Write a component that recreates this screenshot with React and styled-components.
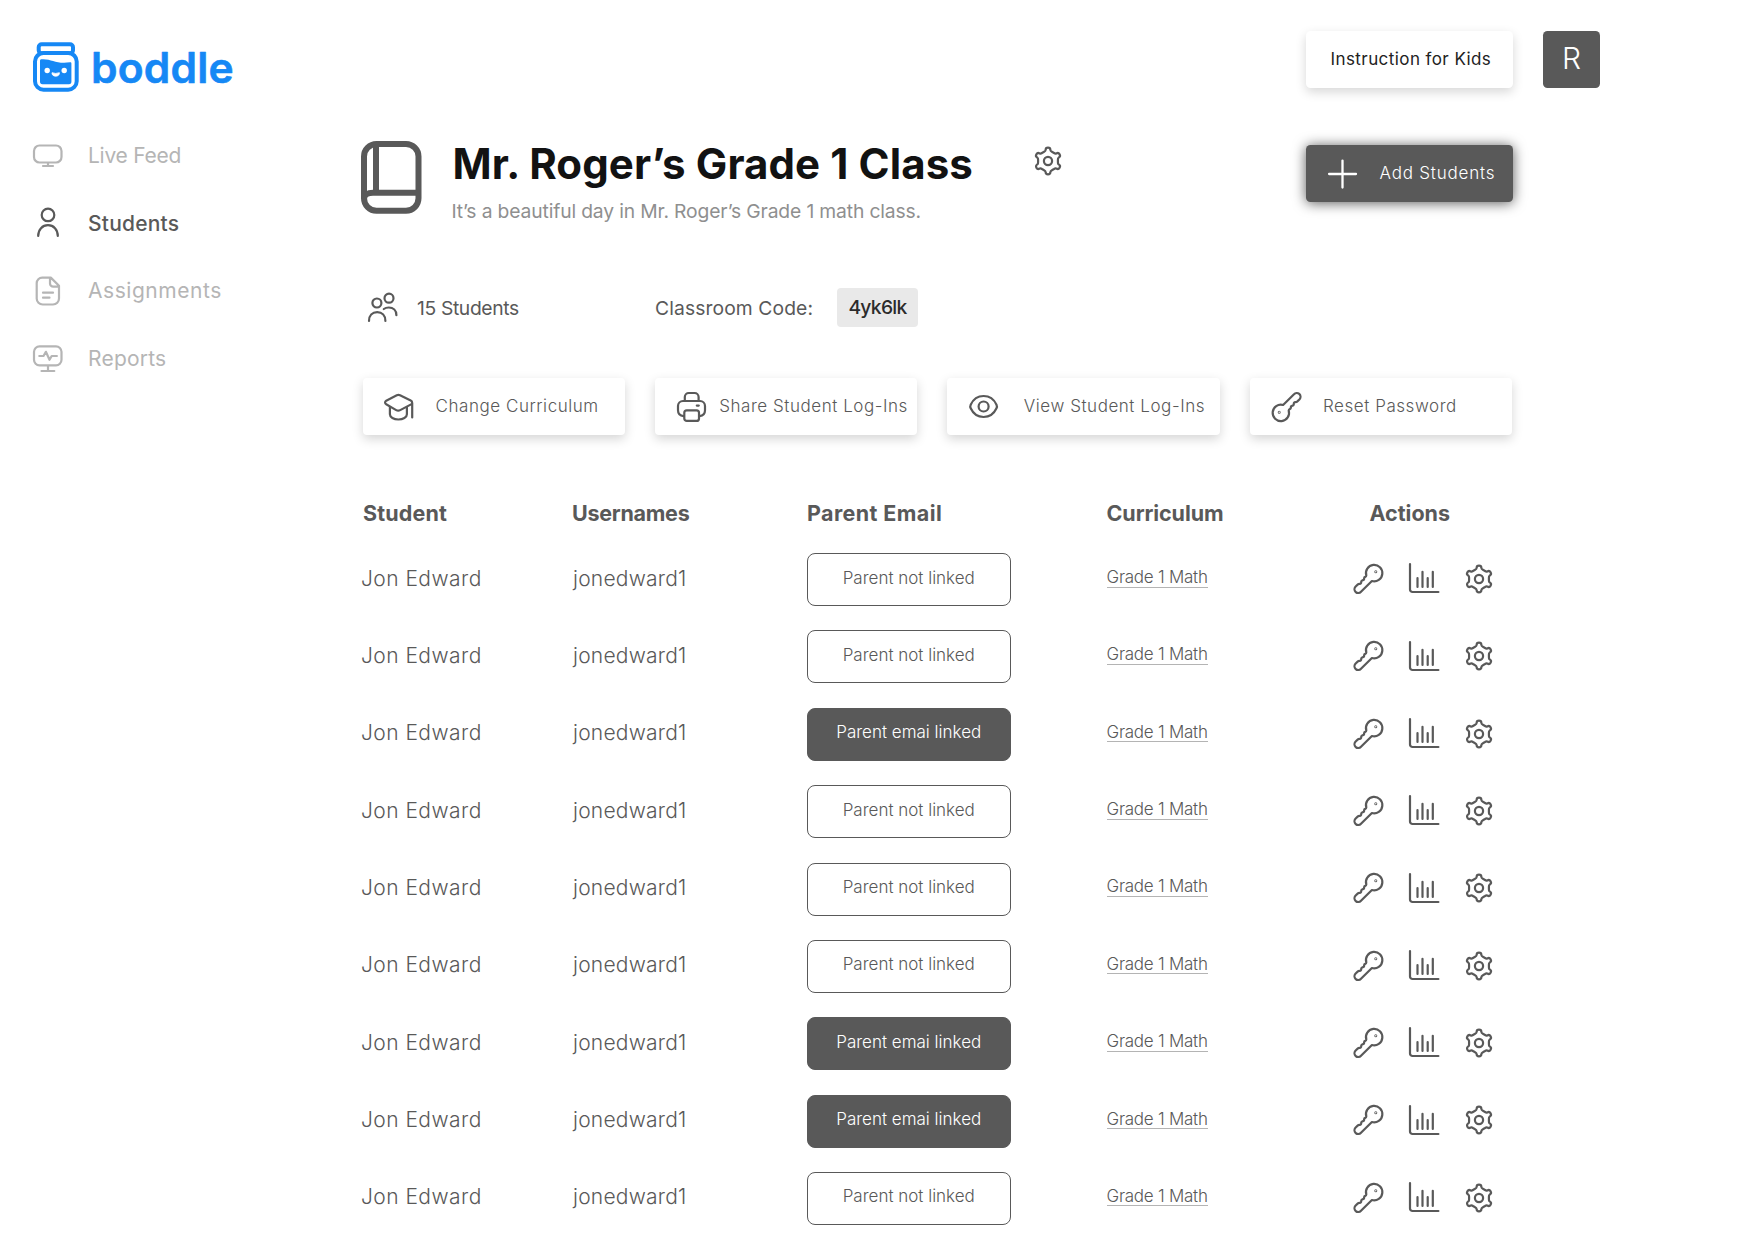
import React from "react";
import styled, { createGlobalStyle } from "styled-components";

const INK = "#595959";
const MUTED = "#b5b5b5";
const BLUE = "#1688f5";

const GlobalStyle = createGlobalStyle`
  * { box-sizing: border-box; }
  body {
    margin: 0;
    background: #fff;
    color: ${INK};
    font-family: Inter, "Open Sans", sans-serif;
    overflow: hidden;
  }
`;

const Page = styled.div`
  display: flex;
  width: 1747px;
  height: 1243px;
  overflow: hidden;
  background: #fff;
`;

const Sidebar = styled.aside`
  flex: 0 0 361px;
  padding: 41.5px 0 0 33px;
`;

const Logo = styled.svg`
  display: block;
  width: 200px;
  height: 50px;
`;

const LogoWord = styled.text`
  font-family: Inter, sans-serif;
  font-size: 42.5px;
  font-weight: 600;
  letter-spacing: 0.2px;
  fill: ${BLUE};
  stroke: ${BLUE};
  stroke-width: 0.6px;
  stroke-linejoin: round;
`;

const Nav = styled.nav`
  display: flex;
  flex-direction: column;
  margin-top: 30.2px;
`;

const NavItem = styled.a`
  display: flex;
  align-items: center;
  gap: 25px;
  height: 67.7px;
  color: ${(p) => (p.$active ? INK : MUTED)};
  font-size: 21px;
  font-weight: ${(p) => (p.$active ? 500 : 400)};
  letter-spacing: ${(p) => p.$track}px;
`;

const Icon = styled.svg`
  display: block;
  flex: none;
  overflow: visible;
  fill: none;
  stroke: currentColor;
  stroke-width: ${(p) => p.$weight || 2.2};
  stroke-linecap: round;
  stroke-linejoin: round;
`;

const Main = styled.main`
  display: flex;
  flex-direction: column;
  width: 1239px;
  padding-top: 31px;
`;

const TopBar = styled.header`
  display: flex;
  justify-content: flex-end;
  gap: 30.5px;
`;

const Button = styled.button`
  display: flex;
  align-items: center;
  flex: none;
  width: 206.5px;
  height: 57px;
  padding: 0 0 1px ${(p) => p.$inset}px;
  border: 0;
  border-radius: 4.5px;
  background: ${(p) => (p.$dark ? INK : "#fff")};
  color: ${(p) => (p.$dark ? "#fff" : "#222")};
  box-shadow: ${(p) =>
    p.$dark ? "0 1px 13px rgba(0, 0, 0, 0.66)" : "0 4px 11px rgba(0, 0, 0, 0.16)"};
  font: ${(p) => (p.$dark ? 300 : 400)} 17px/24px Inter, sans-serif;
  letter-spacing: ${(p) => p.$track}px;
`;

const Avatar = styled.div`
  display: flex;
  align-items: center;
  justify-content: center;
  width: 57px;
  height: 57px;
  padding-bottom: 4px;
  border-radius: 4.5px;
  background: ${INK};
  color: #fff;
  font-size: 30px;
  font-weight: 300;
`;

const Content = styled.div`
  width: 1151.5px;
  margin-top: 53px;
`;

const ClassHeader = styled.section`
  display: flex;
  align-items: flex-start;
  height: 147px;
`;

const ClassText = styled.div`
  width: 551px;
  margin-left: 30.5px;
`;

const Title = styled.h1`
  margin: 0;
  color: #121212;
  font-size: 42px;
  font-weight: 700;
  line-height: 46px;
  letter-spacing: 0.1px;
  white-space: nowrap;
`;

const Subtitle = styled.p`
  margin: 12.3px 0 0 -1px;
  color: #8f8f8f;
  font-size: 19.3px;
  line-height: 24px;
  letter-spacing: -0.15px;
  white-space: nowrap;
`;

const GearSlot = styled.div`
  margin: 4.5px auto 0 30px;
`;

const AddSlot = styled.div`
  margin-top: 4px;
`;

const AddLabel = styled.span`
  margin-left: 22.5px;
`;

const InfoRow = styled.section`
  display: flex;
  align-items: center;
  height: 39px;
  padding-left: 7px;
  font-size: 19.3px;
`;

const StudentCount = styled.div`
  display: flex;
  align-items: center;
  gap: 19.5px;
  width: 287px;
  letter-spacing: -0.36px;
`;

const CodeLabel = styled.span`
  width: 182px;
  letter-spacing: 0.1px;
`;

const CodeBadge = styled.span`
  width: 81px;
  height: 39px;
  border-radius: 4px;
  background: #e9e9e9;
  color: #2b2b2b;
  font-weight: 500;
  line-height: 38px;
  letter-spacing: -0.7px;
  text-align: center;
`;

const Cards = styled.section`
  display: flex;
  justify-content: space-between;
  margin: 51px 0 0 2px;
`;

const Card = styled.button`
  display: flex;
  align-items: center;
  width: ${(p) => p.$width}px;
  height: 57px;
  padding: 0 0 0 ${(p) => p.$inset}px;
  border: 0;
  border-radius: 4px;
  background: #fff;
  color: ${INK};
  box-shadow: 0 4px 11px rgba(0, 0, 0, 0.17);
`;

const CardLabel = styled.span`
  margin: 0 0 2px ${(p) => p.$gap}px;
  font: 300 17px/24px Inter, sans-serif;
  letter-spacing: 0.55px;
  white-space: nowrap;
`;

const Table = styled.section`
  margin-top: 64.4px;
`;

const Row = styled.div`
  display: grid;
  grid-template-columns: 211px 235px 299.5px 246.5px 1fr;
  align-items: center;
  height: 77.36px;
`;

const HeadRow = styled(Row)`
  height: 27px;
  margin-bottom: 14.5px;
  font-size: 21.5px;
  font-weight: 700;
`;

const HeadCell = styled.div`
  padding-left: ${(p) => p.$inset}px;
  letter-spacing: ${(p) => p.$track}px;
`;

const Cell = styled.div`
  padding: 0 0 3px ${(p) => p.$inset}px;
  font-size: 21px;
  font-weight: 300;
  letter-spacing: ${(p) => p.$track}px;
`;

const ParentButton = styled.button`
  width: 203.5px;
  height: 53px;
  padding: 0 0 4px;
  border: 1px solid ${INK};
  border-radius: 8px;
  background: ${(p) => (p.$linked ? INK : "#fff")};
  color: ${(p) => (p.$linked ? "#fff" : INK)};
  font: 300 17px/24px Inter, sans-serif;
`;

const CurriculumLink = styled.a`
  justify-self: start;
  margin-bottom: 2.6px;
  border-bottom: 1px solid #b4b4b4;
  font-size: 17px;
  font-weight: 300;
  line-height: 17.5px;
  letter-spacing: -0.25px;
`;

const Actions = styled.div`
  display: flex;
  align-items: center;
  height: 31px;
  margin-bottom: 1.5px;
  gap: 25.5px;
`;

const gearPath = (() => {
  const at = (deg, u, v) => {
    const a = (deg * Math.PI) / 180;
    const x = 14 + u * Math.cos(a) - v * Math.sin(a);
    const y = 15 + u * Math.sin(a) + v * Math.cos(a);
    return `${x.toFixed(2)} ${y.toFixed(2)}`;
  };
  return (
    [0, 1, 2, 3, 4, 5]
      .map((k) => {
        const d = k * 60 - 90;
        return `${k ? "L" : "M"}${at(d, 9.2, -3.9)}Q${at(d, 9.9, -2.5)} ${at(d, 11, -2.4)}A2.4 2.4 0 0 1 ${at(d, 11, 2.4)}Q${at(d, 9.9, 2.5)} ${at(d, 9.2, 3.9)}`;
      })
      .join("") + "Z"
  );
})();

const GearIcon = () => (
  <Icon width="28" height="30" viewBox="0 0 28 30">
    <path d={gearPath} />
    <circle cx="14" cy="15" r="4.1" />
  </Icon>
);

const keyPath =
  "M18.9 17 8 27.7a3.7 3.7 0 0 1-5.6-4.9L4.9 20.4q.7-.6 1.7-.5 1.8 0 1.6-2 .1-1.3 1.2-1.6 1.9-.3 1.7-2 .1-1.1 1.1-1.4 1-.4 1.1-1.4A8.2 8.2 0 1 1 18.9 17Z";

const KeyIcon = () => (
  <Icon width="30" height="30" viewBox="0 0 30 30">
    <path d={keyPath} />
    <circle cx="22.8" cy="7.7" r=".4" />
  </Icon>
);

const KeyDownIcon = () => (
  <Icon width="30" height="30" viewBox="0 0 30 30">
    <g transform="rotate(180 15 15)">
      <path d={keyPath} />
      <circle cx="22.8" cy="9.7" r=".4" />
    </g>
  </Icon>
);

const ChartIcon = () => (
  <Icon width="31" height="31" viewBox="0 0 31 31">
    <path d="M1 1v25.500A2.500 2.500 0 0 0 3.500 29H29.400M8.500 15v9M13.500 8.800V24M18.700 15v9M23.800 8.800V24" />
  </Icon>
);

const MonitorIcon = () => (
  <Icon width="30" height="30" viewBox="0 0 30 30">
    <rect x="1" y="4.500" width="27.500" height="17" rx="5.500" />
    <path d="M15 22v3M10 25h10" />
  </Icon>
);

const PersonIcon = () => (
  <Icon width="30" height="30" viewBox="0 0 30 30">
    <circle cx="15" cy="6.900" r="6.300" />
    <path d="M5.200 28c0-6.500 4.200-10.800 9.800-10.800s9.800 4.300 9.800 10.800" />
  </Icon>
);

const DocumentIcon = () => (
  <Icon width="30" height="30" viewBox="0 0 30 30">
    <path d="M9.200 1.600h8.600L26 9.800v12.700a6 6 0 0 1-6 6H9.700a6 6 0 0 1-6-6V7.100a5.500 5.500 0 0 1 5.500-5.500ZM17 2v5.400a3.200 3.200 0 0 0 3.200 3.200H26M10 16.700h10M10 21.700h6.500" />
  </Icon>
);

const ReportIcon = () => (
  <Icon width="30" height="30" viewBox="0 0 30 30">
    <rect x="1" y="2.300" width="27.500" height="19" rx="5.500" />
    <path d="M15 22v5M8.500 27h12.800M6.300 12h4.200l2.400-4.200 3.600 8 2.200-3.800h5.200" />
  </Icon>
);

const BookIcon = () => (
  <Icon width="61" height="73" viewBox="0 0 61 73" $weight={6}>
    <rect x="3" y="3" width="54.500" height="66.800" rx="12.500" />
    <path d="M15 4v46" strokeLinecap="butt" />
    <path d="M57 51.800H12C6.500 51.800 3 54 3 58" strokeLinecap="butt" />
  </Icon>
);

const UsersIcon = () => (
  <Icon width="29.500" height="29" viewBox="0 0 29.500 29">
    <circle cx="8.900" cy="10" r="4.500" />
    <circle cx="21" cy="5.200" r="4.500" />
    <path d="M1 28c0-5.300 3.300-8.800 8.200-8.800S17.400 22.700 17.400 28M15.800 16c1.300-1 3-1.500 5-1.500 4.400 0 7.600 3 7.600 7.700" />
  </Icon>
);

const PlusIcon = () => (
  <Icon width="29" height="29" viewBox="0 0 29 29" $weight={2.3}>
    <path d="M14.500 1.600V28.500M1.100 15H28" />
  </Icon>
);

const GraduationIcon = () => (
  <Icon width="29.500" height="30" viewBox="0 -1.500 29.500 30">
    <path d="M28.200 24V9.500c0-1.100-.5-1.900-1.500-2.400L16 1.700a3.600 3.600 0 0 0-3.200 0L2.200 7.200c-1.500.8-1.500 2.800 0 3.600l10 5.800a4 4 0 0 0 4 0L28 10.400" />
    <path d="M5.900 13.500v7.200c0 3.200 3.800 5.300 8.500 5.300s8.500-2.100 8.500-5.300v-7.200" />
  </Icon>
);

const PrinterIcon = () => (
  <Icon width="29" height="30" viewBox="0 0 29 30">
    <path d="M7.800 9V5a4 4 0 0 1 4-4h5.800a4 4 0 0 1 4 4v4M6.600 24.200C3 23.800 1 21.700 1 18.300V14a5 5 0 0 1 5-5h17a5 5 0 0 1 5 5v4.300c0 3.400-1.900 5.500-5.400 5.900M19.800 13.600h2" />
    <rect x="7.300" y="18.300" width="14.700" height="10.600" rx="2.500" />
  </Icon>
);

const EyeIcon = () => (
  <Icon width="29.500" height="23" viewBox="0 0 29.500 23">
    <path d="M1.700 9.700C4.200 4.300 8.900 1 14.600 1s10.400 3.300 12.900 8.700a4.200 4.200 0 0 1 0 3.600C25 18.700 20.300 22 14.600 22S4.200 18.700 1.700 13.300a4.200 4.200 0 0 1 0-3.600Z" />
    <circle cx="14.600" cy="11.500" r="5" />
  </Icon>
);

const BoddleLogo = () => (
  <Logo viewBox="0 0 200 50">
    <rect x="5.700" y="2.200" width="34.300" height="9" rx="3" fill="none" stroke={BLUE} strokeWidth="4" />
    <rect x="2" y="11" width="41.700" height="36.700" rx="8.500" fill="#fff" stroke={BLUE} strokeWidth="4" />
    <path
      d="M7 18.700c0-1.200.8-1.500 2-1.500 10-.5 14 5.200 28 3.100 1-.1 1.400.3 1.400 1.300v18.200c0 1.500-.8 2.400-2.400 2.400H9.500C7.800 42.200 7 41.300 7 39.800Z"
      fill={BLUE}
    />
    <circle cx="14.200" cy="28.500" r="2.700" fill="#fff" />
    <circle cx="31.200" cy="28.500" r="2.700" fill="#fff" />
    <path d="M19 30.700q3.700 1.500 7.400 0c.5 4.700-7.900 4.700-7.400 0Z" fill="#fff" stroke="#fff" strokeWidth=".8" />
    <LogoWord x="58" y="40.500">boddle</LogoWord>
  </Logo>
);

const navItems = [
  { label: "Live Feed", icon: MonitorIcon, track: -0.26 },
  { label: "Students", icon: PersonIcon, track: 0.22, active: true },
  { label: "Assignments", icon: DocumentIcon, track: 0.55 },
  { label: "Reports", icon: ReportIcon, track: 0.22 },
];

const cards = [
  { label: "Change Curriculum", icon: GraduationIcon, width: 262, inset: 21, gap: 22 },
  { label: "Share Student Log-Ins", icon: PrinterIcon, width: 262, inset: 21.5, gap: 13.5 },
  { label: "View Student Log-Ins", icon: EyeIcon, width: 273, inset: 21.5, gap: 25.5 },
  { label: "Reset Password", icon: KeyDownIcon, width: 262, inset: 21.5, gap: 21 },
];

const columns = [
  { label: "Student", inset: 2, track: 0.15 },
  { label: "Usernames", inset: 0, track: -0.27 },
  { label: "Parent Email", inset: 0, track: 0.4 },
  { label: "Curriculum", inset: 0, track: -0.08 },
  { label: "Actions", inset: 16.5, track: 0 },
];

const students = [false, false, true, false, false, false, true, true, false].map((linked) => ({
  name: "Jon Edward",
  username: "jonedward1",
  curriculum: "Grade 1 Math",
  linked,
}));

export default function App() {
  return (
    <Page>
      <GlobalStyle />
      <Sidebar>
        <BoddleLogo />
        <Nav>
          {navItems.map(({ label, icon: Glyph, track, active }) => (
            <NavItem key={label} $active={active} $track={track}>
              <Glyph />
              {label}
            </NavItem>
          ))}
        </Nav>
      </Sidebar>
      <Main>
        <TopBar>
          <Button $inset={24.5} $track={0.42}>
            Instruction for Kids
          </Button>
          <Avatar>R</Avatar>
        </TopBar>
        <Content>
          <ClassHeader>
            <BookIcon />
            <ClassText>
              <Title>Mr. Roger’s Grade 1 Class</Title>
              <Subtitle>It’s a beautiful day in Mr. Roger’s Grade 1 math class.</Subtitle>
            </ClassText>
            <GearSlot>
              <GearIcon />
            </GearSlot>
            <AddSlot>
              <Button $dark $inset={22} $track={0.8}>
                <PlusIcon />
                <AddLabel>Add Students</AddLabel>
              </Button>
            </AddSlot>
          </ClassHeader>
          <InfoRow>
            <StudentCount>
              <UsersIcon />
              15 Students
            </StudentCount>
            <CodeLabel>Classroom Code:</CodeLabel>
            <CodeBadge>4yk6lk</CodeBadge>
          </InfoRow>
          <Cards>
            {cards.map(({ label, icon: Glyph, width, inset, gap }) => (
              <Card key={label} $width={width} $inset={inset}>
                <Glyph />
                <CardLabel $gap={gap}>{label}</CardLabel>
              </Card>
            ))}
          </Cards>
          <Table>
            <HeadRow>
              {columns.map(({ label, inset, track }) => (
                <HeadCell key={label} $inset={inset} $track={track}>
                  {label}
                </HeadCell>
              ))}
            </HeadRow>
            {students.map((s, i) => (
              <Row key={i}>
                <Cell $inset={0} $track={0.45}>{s.name}</Cell>
                <Cell $inset={1} $track={0.22}>{s.username}</Cell>
                <ParentButton $linked={s.linked}>
                  {s.linked ? "Parent emai linked" : "Parent not linked"}
                </ParentButton>
                <CurriculumLink>{s.curriculum}</CurriculumLink>
                <Actions>
                  <KeyIcon />
                  <ChartIcon />
                  <GearIcon />
                </Actions>
              </Row>
            ))}
          </Table>
        </Content>
      </Main>
    </Page>
  );
}
